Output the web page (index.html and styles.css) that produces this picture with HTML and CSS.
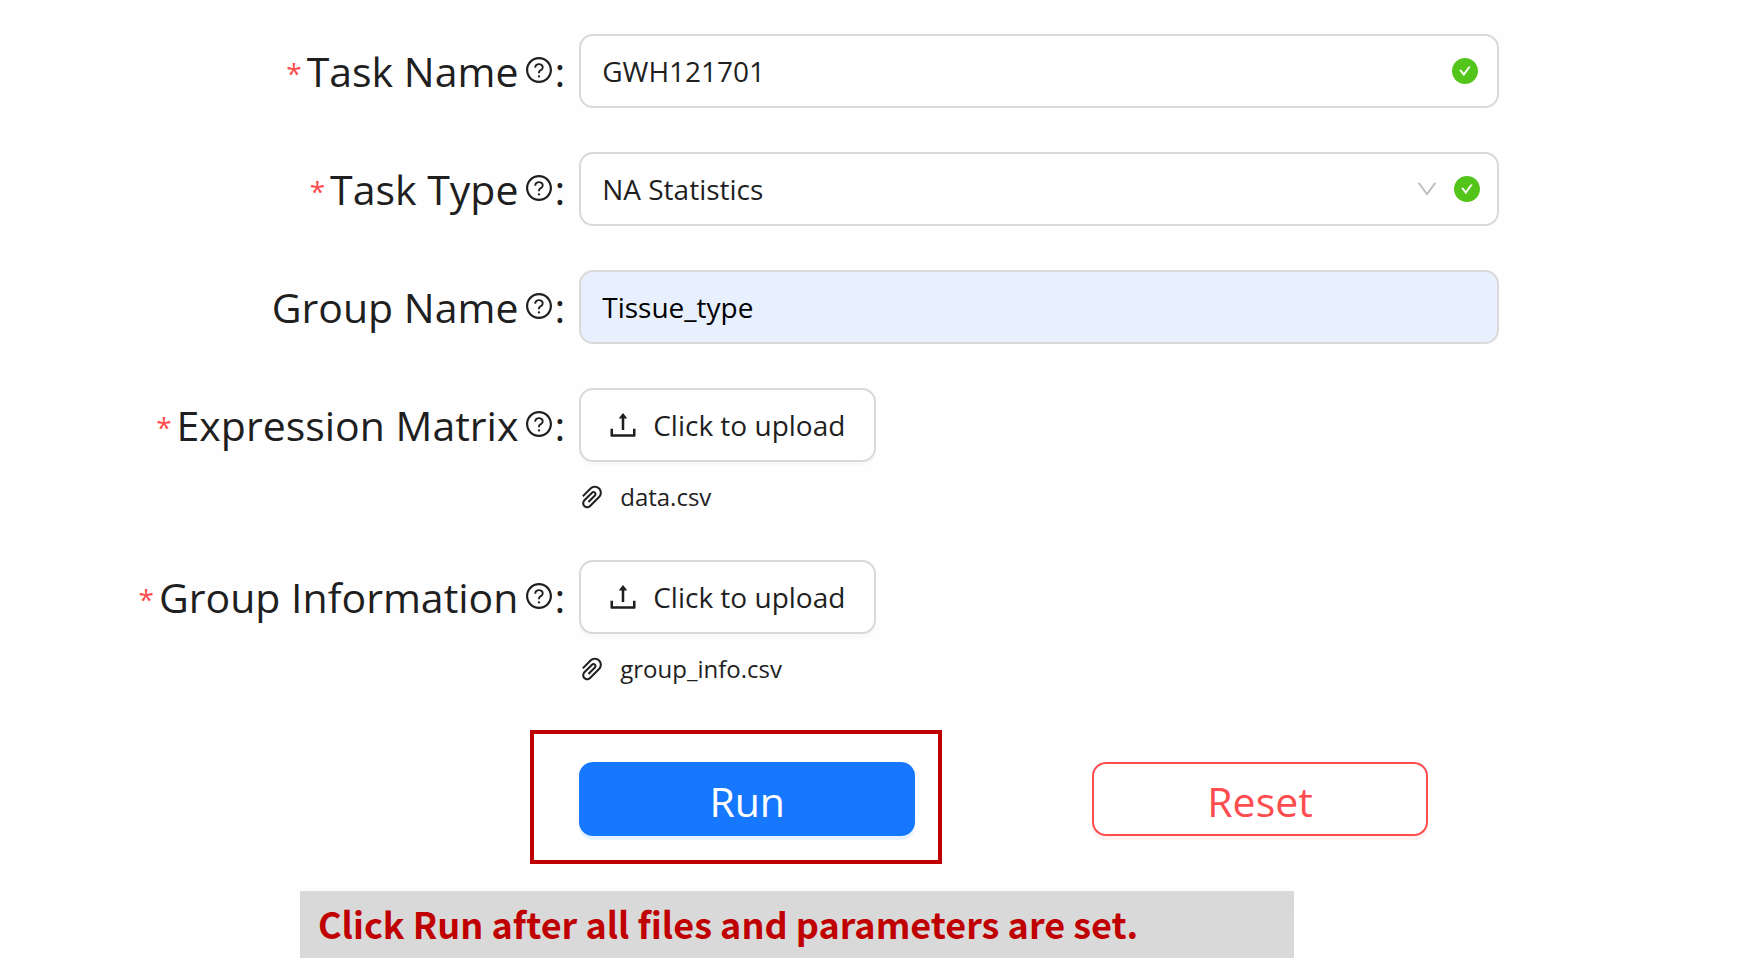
FILE: index.html
```html
<!DOCTYPE html>
<html lang="en">
<head>
<meta charset="utf-8">
<meta name="viewport" content="width=device-width, initial-scale=1">
<title>New Task</title>
<link rel="stylesheet" href="styles.css">
</head>
<body>
<svg class="sprite" aria-hidden="true">
  <symbol id="i-help" viewBox="64 64 896 896"><path d="M512 64C264.6 64 64 264.6 64 512s200.6 448 448 448 448-200.6 448-448S759.4 64 512 64zm0 820c-205.4 0-372-166.6-372-372s166.6-372 372-372 372 166.6 372 372-166.6 372-372 372z"/><path d="M623.6 316.7C593.6 290.4 554 276 512 276s-81.6 14.5-111.6 40.7C369.2 344 352 380.7 352 420v7.6c0 4.4 3.6 8 8 8h48c4.4 0 8-3.6 8-8V420c0-44.1 43.1-80 96-80s96 35.9 96 80c0 31.1-22 59.6-56.1 72.7-21.2 8.1-39.2 22.3-52.1 40.9-13.1 19-19.9 41.8-19.9 64.9V620c0 4.4 3.6 8 8 8h48c4.4 0 8-3.6 8-8v-22.7a48.3 48.3 0 0130.9-44.8c59-22.7 97.1-74.7 97.1-132.5.1-39.3-17.1-76-48.3-103.3zM472 732a40 40 0 1080 0 40 40 0 10-80 0z"/></symbol>
  <symbol id="i-check" viewBox="64 64 896 896"><path d="M512 64C264.6 64 64 264.6 64 512s200.6 448 448 448 448-200.6 448-448S759.4 64 512 64zm193.5 301.7l-210.6 292a31.8 31.8 0 01-51.7 0L318.5 484.9c-3.8-5.3 0-12.7 6.5-12.7h46.9c10.2 0 19.9 4.9 25.9 13.3l71.2 98.8 157.2-218c6-8.3 15.6-13.3 25.9-13.3H699c6.5 0 10.3 7.4 6.5 12.7z"/></symbol>
  <symbol id="i-down" viewBox="64 64 896 896"><path d="M884 256h-75c-5.1 0-9.9 2.5-12.9 6.6L512 654.2 227.9 262.6c-3-4.1-7.8-6.6-12.9-6.6h-75c-6.5 0-10.3 7.4-6.5 12.7l352.6 486.1c12.8 17.6 39 17.6 51.7 0l352.6-486.1c3.9-5.3.1-12.7-6.4-12.7z"/></symbol>
  <symbol id="i-upload" viewBox="64 64 896 896"><path d="M400 317.7h73.9V656c0 4.4 3.6 8 8 8h60c4.4 0 8-3.6 8-8V317.7H624c6.7 0 10.4-7.7 6.3-12.9L518.3 163a8 8 0 00-12.6 0l-112 141.7c-4.1 5.3-.4 13 6.3 13zM878 626h-60c-4.4 0-8 3.6-8 8v154H214V634c0-4.4-3.6-8-8-8h-60c-4.4 0-8 3.6-8 8v198c0 17.7 14.3 32 32 32h684c17.7 0 32-14.3 32-32V634c0-4.4-3.6-8-8-8z"/></symbol>
  <symbol id="i-clip" viewBox="64 64 896 896"><path d="M779.3 196.6c-94.2-94.2-247.6-94.2-341.7 0l-261 260.8c-1.7 1.7-2.6 4-2.6 6.4s.9 4.7 2.6 6.4l36.9 36.9a9 9 0 0012.7 0l261-260.8c32.4-32.4 75.5-50.2 121.3-50.2s88.9 17.8 121.2 50.2c32.4 32.4 50.2 75.5 50.2 121.2 0 45.8-17.8 88.8-50.2 121.2l-266 265.9-43.1 43.1c-40.3 40.3-105.8 40.3-146.1 0-19.5-19.5-30.2-45.4-30.2-73s10.7-53.5 30.2-73l263.9-263.8c6.7-6.6 15.5-10.3 24.9-10.3h.1c9.4 0 18.1 3.7 24.7 10.3 6.7 6.7 10.3 15.5 10.3 24.9 0 9.3-3.7 18.1-10.3 24.7L372.4 653c-1.7 1.7-2.6 4-2.6 6.4s.9 4.7 2.6 6.4l36.9 36.9a9 9 0 0012.7 0l215.6-215.6c19.9-19.9 30.8-46.3 30.8-74.4s-11-54.6-30.8-74.4c-41.1-41.1-107.9-41-149 0L463 364 224.8 602.1A172.22 172.22 0 00174 724.8c0 46.3 18.1 89.8 50.8 122.5 33.9 33.8 78.3 50.7 122.7 50.7 44.4 0 88.8-16.9 122.6-50.7l309.2-309C824.8 492.7 850 432 850 367.5c.1-64.6-25.1-125.3-70.7-170.9z"/></symbol>
</svg>

<form class="panel">
  <div class="row">
    <label class="label" for="task-name"><span class="star">*</span><span>Task Name</span><svg class="help"><use href="#i-help"/></svg><span class="colon">:</span></label>
    <div class="field">
      <input class="control" id="task-name" type="text" value="GWH121701">
      <span class="status"><svg class="ok"><use href="#i-check"/></svg></span>
    </div>
  </div>
  <div class="row">
    <label class="label" for="task-type"><span class="star">*</span><span>Task Type</span><svg class="help"><use href="#i-help"/></svg><span class="colon">:</span></label>
    <div class="field">
      <select class="control" id="task-type"><option>NA Statistics</option></select>
      <span class="status status-select"><svg class="down"><use href="#i-down"/></svg><svg class="ok"><use href="#i-check"/></svg></span>
    </div>
  </div>
  <div class="row">
    <label class="label" for="group-name"><span>Group Name</span><svg class="help"><use href="#i-help"/></svg><span class="colon">:</span></label>
    <div class="field">
      <input class="control autofilled" id="group-name" type="text" value="Tissue_type">
    </div>
  </div>
  <div class="row">
    <label class="label" for="matrix"><span class="star">*</span><span>Expression Matrix</span><svg class="help"><use href="#i-help"/></svg><span class="colon">:</span></label>
    <div class="field">
      <button class="upload" id="matrix" type="button"><svg class="up"><use href="#i-upload"/></svg>Click to upload</button>
      <div class="file"><svg class="clip"><use href="#i-clip"/></svg>data.csv</div>
    </div>
  </div>
  <div class="row">
    <label class="label" for="group-info"><span class="star">*</span><span>Group Information</span><svg class="help"><use href="#i-help"/></svg><span class="colon">:</span></label>
    <div class="field">
      <button class="upload" id="group-info" type="button"><svg class="up"><use href="#i-upload"/></svg>Click to upload</button>
      <div class="file"><svg class="clip"><use href="#i-clip"/></svg>group_info.csv</div>
    </div>
  </div>
  <div class="row actions">
    <div class="buttons">
      <div class="highlight"><button class="action run" type="submit">Run</button></div>
      <button class="action reset" type="reset">Reset</button>
    </div>
  </div>
</form>

<p class="note">Click Run after all files and parameters are set.</p>
</body>
</html>
```

FILE: styles.css
```css
* {
  box-sizing: border-box;
}

body {
  margin: 0;
  min-height: 100vh;
  display: flex;
  flex-direction: column;
  background: #fff;
  color: #1f1f1f;
  font-family: "Open Sans", "Noto Sans", sans-serif;
  font-size: 28px;
}

.sprite {
  position: absolute;
  width: 0;
  height: 0;
}

svg {
  flex: none;
  fill: currentColor;
}

.panel {
  width: 88%;
  margin-left: 3%;
  padding: 34px 0 76px;
  background: #fefefe;
}

.row {
  display: grid;
  grid-template-columns: 527fr 920fr 88fr;
  margin-bottom: 44px;
}

.label {
  display: flex;
  align-items: center;
  justify-content: flex-end;
  height: 74px;
  padding-right: 14px;
  font-size: 41px;
  white-space: nowrap;
}

.star {
  margin-right: 5px;
  padding-top: 4px;
  color: #ff4d4f;
  font-size: 28px;
}

.help {
  width: 26px;
  height: 26px;
  margin: 0 2px 2px 8px;
}

.field {
  position: relative;
}

.control {
  display: block;
  width: 100%;
  height: 74px;
  padding: 0 100px 0 21px;
  border: 2px solid #d9d9d9;
  border-radius: 14px;
  background: #fff;
  color: #1f1f1f;
  font: inherit;
  appearance: none;
}

.autofilled {
  background: #e8f0fe;
  color: #000;
}

.status {
  position: absolute;
  top: 0;
  right: 21px;
  height: 74px;
  display: flex;
  align-items: center;
  gap: 16px;
  pointer-events: none;
}

.status-select {
  right: 19px;
}

.ok {
  width: 26px;
  height: 26px;
  color: #52c41a;
}

.down {
  width: 22px;
  height: 22px;
  color: #bfbfbf;
}

.upload {
  display: flex;
  align-items: center;
  gap: 15px;
  height: 74px;
  padding: 0 29px 0 27px;
  border: 2px solid #d9d9d9;
  border-radius: 14px;
  background: #fff;
  box-shadow: 0 4px 0 rgba(0, 0, 0, 0.02);
  color: #1f1f1f;
  font: inherit;
}

.up {
  width: 30px;
  height: 30px;
}

.file {
  display: flex;
  align-items: center;
  gap: 15px;
  height: 39px;
  margin-top: 15px;
  font-size: 24px;
}

.clip {
  width: 26px;
  height: 26px;
}

.actions {
  margin: 74px 0 0;
}

.buttons {
  grid-column: 2;
  display: grid;
  grid-template-columns: 336fr 177fr 336fr 71fr;
}

.highlight {
  position: relative;
}

.highlight::after {
  content: "";
  position: absolute;
  inset: -32px -27px -28px -49px;
  border: 4px solid #c00000;
  pointer-events: none;
}

.action {
  width: 100%;
  height: 74px;
  padding: 3px 0 0;
  border: 2px solid;
  border-radius: 14px;
  font: inherit;
  font-size: 41px;
  line-height: 60px;
}

.run {
  border-color: #1677ff;
  background: #1677ff;
  box-shadow: 0 4px 0 rgba(5, 145, 255, 0.1);
  color: #fff;
}

.reset {
  grid-column: 3;
  border-color: #ff4d4f;
  background: #fff;
  box-shadow: 0 4px 0 rgba(255, 38, 5, 0.06);
  color: #ff4d4f;
}

.note {
  position: relative;
  flex: 1;
  width: 57%;
  margin: -21px 0 0 300px;
  padding: 2px 18px 4px;
  background: #d9d9d9;
  color: #c00000;
  font-family: "Noto Sans CJK SC", sans-serif;
  font-size: 36px;
  font-weight: 700;
  line-height: 60px;
}
```
